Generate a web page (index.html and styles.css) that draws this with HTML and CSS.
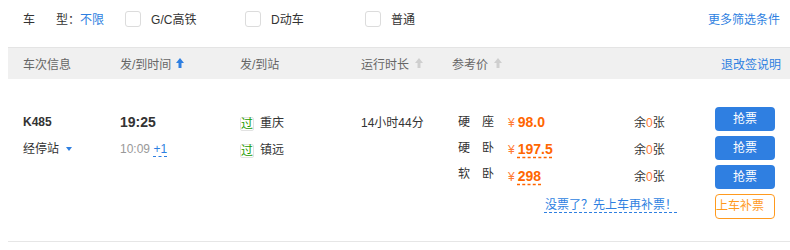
FILE: index.html
```html
<!DOCTYPE html>
<html lang="zh-CN">
<head>
<meta charset="utf-8">
<title>车次列表</title>
<link rel="stylesheet" href="styles.css">
</head>
<body>
<div class="wrap">
  <div class="filter">
    <span class="flabel"><span class="fl1">车</span>型：</span>
    <a class="link all">不限</a>
    <label class="opt"><span class="cb"></span>G/C高铁</label>
    <label class="opt"><span class="cb"></span>D动车</label>
    <label class="opt"><span class="cb"></span>普通</label>
    <a class="link more">更多筛选条件</a>
  </div>

  <div class="thead">
    <div class="h1">车次信息</div>
    <div class="h2">发/到时间<svg class="arrow" viewBox="0 0 8 10" width="8" height="10"><polygon points="4,0 8,5 5.5,5 5.5,10 2.5,10 2.5,5 0,5" fill="#2e7fe1"/></svg></div>
    <div class="h3">发/到站</div>
    <div class="h4">运行时长<svg class="arrow" viewBox="0 0 8 10" width="8" height="10"><polygon points="4,0 8,5 5.5,5 5.5,10 2.5,10 2.5,5 0,5" fill="#cfcfcf"/></svg></div>
    <div class="h5">参考价<svg class="arrow" viewBox="0 0 8 10" width="8" height="10"><polygon points="4,0 8,5 5.5,5 5.5,10 2.5,10 2.5,5 0,5" fill="#cfcfcf"/></svg></div>
    <a class="link h6">退改签说明</a>
  </div>

  <div class="row">
    <div class="c1">
      <div class="line train">K485</div>
      <div class="line">经停站<span class="tri"></span></div>
    </div>
    <div class="c2">
      <div class="line dep">19:25</div>
      <div class="line arr">10:09 <span class="plus">+1</span></div>
    </div>
    <div class="c3">
      <div class="line st"><span class="badge">过</span>重庆</div>
      <div class="line st"><span class="badge">过</span>镇远</div>
    </div>
    <div class="c4">
      <div class="line dur">14小时44分</div>
    </div>
    <div class="c5">
      <div class="pleft">
        <div class="ptable">
          <div class="pcol seat">
            <div>硬　座</div>
            <div>硬　卧</div>
            <div>软　卧</div>
          </div>
          <div class="pcol price">
            <div><span class="yen">¥</span><span class="num">98.0</span></div>
            <div><span class="yen">¥</span><span class="num dash">197.5</span></div>
            <div><span class="yen">¥</span><span class="num dash">298</span></div>
          </div>
          <div class="pcol remain">
            <div>余<em>0</em>张</div>
            <div>余<em>0</em>张</div>
            <div>余<em>0</em>张</div>
          </div>
        </div>
        <div class="nolink"><a class="link">没票了？先上车再补票！</a></div>
      </div>
      <div class="btns">
        <button class="btn">抢票</button>
        <button class="btn">抢票</button>
        <button class="btn">抢票</button>
        <button class="btn2">上车补票</button>
      </div>
    </div>
  </div>
</div>
</body>
</html>
```

FILE: styles.css
```css
* { box-sizing: border-box; }
html, body { margin: 0; padding: 0; background: #fff; }
body {
  font-family: "Liberation Sans", "Noto Sans CJK SC", sans-serif;
  font-size: 12px;
  color: #333;
  overflow: hidden;
}
.wrap { margin-left: 8px; width: 782px; }
.link { color: #2e7fe1; text-decoration: none; cursor: pointer; }

/* filter */
.filter {
  height: 40px;
  margin-bottom: 7px;
  padding-left: 15px;
  padding-right: 10px;
  display: flex;
  align-items: center;
  line-height: 16px;
}
.fl1 { margin-right: 21px; }
.all { margin-left: 0; margin-right: 21px; }
.opt { width: 120px; display: flex; align-items: center; }
.cb {
  width: 16px; height: 16px;
  border: 1px solid #dcdcdc;
  border-radius: 3px;
  margin-right: 10px;
  background: #fff;
  margin-top: -2px;
}
.more { margin-left: auto; }

/* header */
.thead {
  height: 32px;
  border-top: 1px solid #e4e4e4;
  background: #f0f0f0;
  display: flex;
  align-items: center;
  padding-left: 15px;
  padding-right: 9px;
  color: #666;
}
.thead > div { display: flex; align-items: center; }
.h1 { width: 97px; }
.h2 { width: 120px; }
.h3 { width: 121px; }
.h4 { width: 91px; }
.h5 { flex: 1; }
.arrow { margin-left: 6px; margin-top: -2px; }
.h2 .arrow { margin-left: 5px; }

/* row */
.row {
  display: flex;
  padding: 28px 0 22px 15px;
  border-bottom: 1px solid #e6e6e6;
}
.line { line-height: 27px; height: 27px; white-space: nowrap; }
.c1 { width: 97px; padding-top: 2px; }
.train { font-weight: bold; }
.tri {
  display: inline-block;
  width: 0; height: 0;
  border-left: 3.5px solid transparent;
  border-right: 3.5px solid transparent;
  border-top: 4px solid #2e7fe1;
  margin-left: 7px;
  vertical-align: middle;
  margin-top: -2px;
}
.c2 { width: 120px; padding-top: 2px; }
.dep { font-size: 14px; font-weight: bold; }
.arr { color: #999; }
.plus {
  color: #2e7fe1;
  text-decoration: underline dashed #2e7fe1;
  text-underline-offset: 3px;
}
.c3 { width: 121px; padding-top: 3px; }
.st { display: flex; align-items: center; }
.badge {
  width: 14px; height: 14px;
  border: 1px solid #e2e2e2;
  border-radius: 2px;
  color: #1a9a00;
  font-size: 12px;
  line-height: 12px;
  text-align: center;
  margin-right: 6px;
}
.c4 { width: 91px; padding-top: 3px; }
.c5 { display: flex; padding-left: 6px; }

.pleft { width: 257px; display: flex; flex-direction: column; }
.ptable { display: flex; }
.pcol { display: flex; flex-direction: column; }
.seat { width: 50px; padding-top: 2px; line-height: 26px; }
.price { width: 126px; padding-top: 2px; line-height: 26px; color: #ff6600; }
.yen { font-size: 12px; color: #ff7a33; }
.num {
  font-size: 14px;
  font-weight: bold;
  margin-left: 3px;
}
.dash {
  text-decoration: underline dashed #ff6600;
  text-underline-offset: 3px;
}
.remain { width: 81px; padding-top: 3px; line-height: 27px; }
.remain em { font-style: normal; color: #ff7a33; }
.nolink {
  margin-top: 6px;
  line-height: 16px;
  text-align: right;
  padding-right: 38px;
}
.nolink .link {
  text-decoration: underline dashed #2e7fe1;
  text-underline-offset: 3px;
}

.btns { width: 60px; display: flex; flex-direction: column; gap: 5px; }
.btn {
  width: 60px; height: 24px;
  border: 0;
  border-radius: 4px;
  background: #2f7fe1;
  color: #fff;
  font-family: "Liberation Sans", "Noto Sans CJK SC", sans-serif;
  font-size: 12px;
  padding: 0;
  line-height: 24px;
}
.btn2 {
  width: 60px; height: 25px;
  border: 1px solid #ff9a1e;
  border-radius: 4px;
  background: #fff;
  color: #ff9a1e;
  font-family: "Liberation Sans", "Noto Sans CJK SC", sans-serif;
  font-size: 12px;
  padding: 0;
  text-align: left;
  line-height: 23px;
}
```
